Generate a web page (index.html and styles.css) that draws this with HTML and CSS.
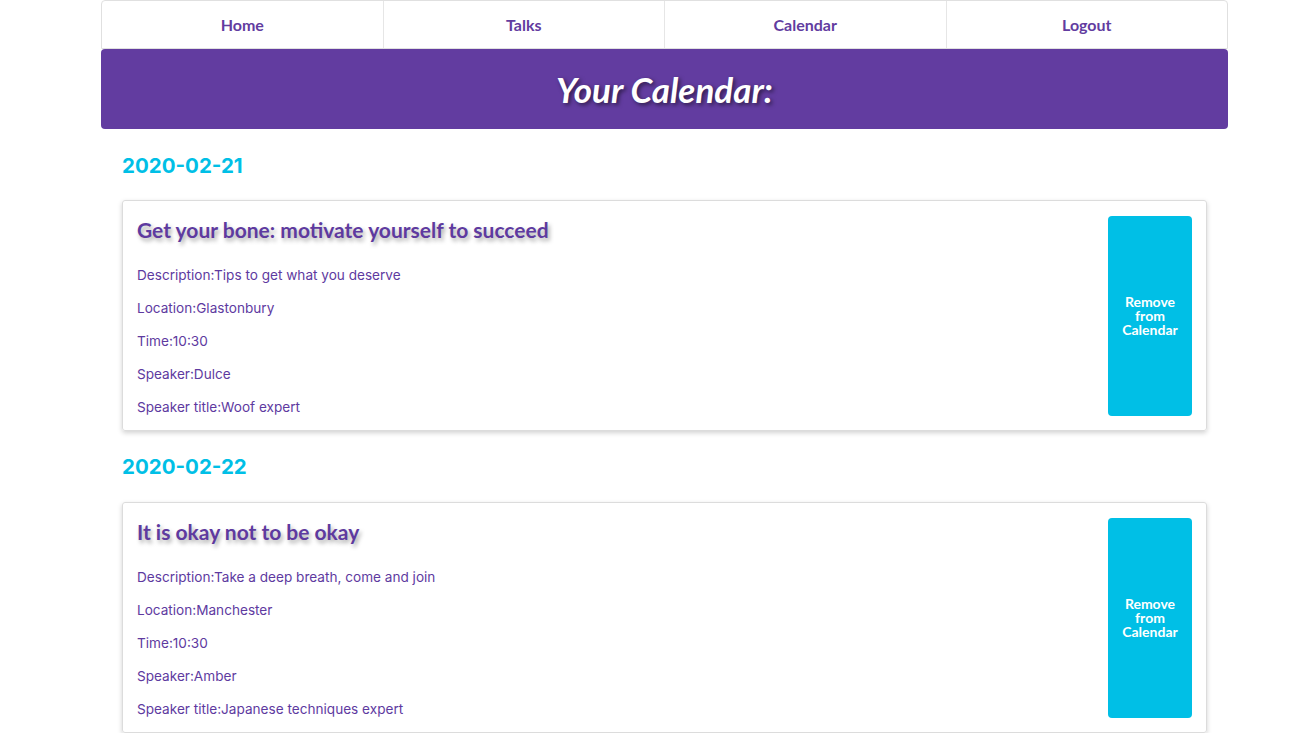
FILE: index.html
```html
<!DOCTYPE html>
<html>
<head>
<meta charset="utf-8">
<link rel="stylesheet" href="styles.css">
</head>
<body>
<div class="page">
  <nav class="nav">
    <a class="nav-item">Home</a>
    <a class="nav-item">Talks</a>
    <a class="nav-item">Calendar</a>
    <a class="nav-item">Logout</a>
  </nav>
  <header class="banner"><h1>Your Calendar:</h1></header>
  <section class="day">
    <h2 class="date">2020-02-21</h2>
    <div class="card">
      <div class="info">
        <h3 class="title">Get your bone: motivate yourself to succeed</h3>
        <p>Description:Tips to get what you deserve</p>
        <p>Location:Glastonbury</p>
        <p>Time:10:30</p>
        <p>Speaker:Dulce</p>
        <p>Speaker title:Woof expert</p>
      </div>
      <button class="remove">Remove from Calendar</button>
    </div>
  </section>
  <section class="day">
    <h2 class="date">2020-02-22</h2>
    <div class="card">
      <div class="info">
        <h3 class="title">It is okay not to be okay</h3>
        <p>Description:Take a deep breath, come and join</p>
        <p>Location:Manchester</p>
        <p>Time:10:30</p>
        <p>Speaker:Amber</p>
        <p>Speaker title:Japanese techniques expert</p>
      </div>
      <button class="remove">Remove from Calendar</button>
    </div>
  </section>
</div>
</body>
</html>
```

FILE: styles.css
```css
* { box-sizing: border-box; }
body {
  margin: 0;
  background: #fff;
  font-family: "Inter", "Liberation Sans", sans-serif;
}
.page {
  width: 1127px;
  margin-left: 101px;
}
.nav {
  display: flex;
  height: 49px;
  border: 1px solid #e0e0e0;
  border-radius: 4px 4px 0 0;
}
.nav-item {
  flex: 1;
  display: flex;
  align-items: center;
  justify-content: center;
  font-family: "Lato", sans-serif;
  font-weight: 700;
  font-size: 16px;
  color: #623ca0;
  border-left: 1px solid #e6e6e6;
}
.nav-item:first-child { border-left: none; }
.banner {
  height: 80px;
  background: #623ca0;
  border-radius: 4px;
  display: flex;
  align-items: center;
  justify-content: center;
}
.banner h1 {
  margin: 0;
  font-family: "Lato", sans-serif;
  font-style: italic;
  font-weight: 700;
  font-size: 35px;
  line-height: 42px;
  color: #fff;
  text-shadow: 2px 2px 4px rgba(0,0,0,0.55);
}
.day { padding: 0 21px; }
.date {
  margin: 24px 0 23px;
  font-family: "Inter", sans-serif;
  font-weight: 700;
  font-size: 20.5px;
  line-height: 24px;
  color: #00bfe6;
}
.day:first-of-type .date { margin-top: 25px; margin-bottom: 22px; }
.card {
  display: flex;
  align-items: flex-start;
  padding: 15px 14px 14px;
  border: 1px solid #dcdcdc;
  border-radius: 3px;
  box-shadow: 0 2px 5px rgba(0,0,0,0.18);
}
.info { flex: 1; }
.title {
  margin: 0 0 23px;
  font-family: "Lato", sans-serif;
  font-weight: 700;
  font-size: 21px;
  line-height: 28px;
  color: #5e3a9f;
  text-shadow: 2px 3px 4px rgba(0,0,0,0.35);
}
.info p {
  margin: 0 0 16px;
  font-size: 13.6px;
  line-height: 17px;
  color: #5e3a9f;
}
.info p:last-child { margin-bottom: 0; }
.remove {
  width: 84px;
  height: 200px;
  border: none;
  border-radius: 4px;
  background: #00bfe6;
  color: #fff;
  font-family: "Lato", sans-serif;
  font-weight: 700;
  font-size: 14px;
  line-height: 14px;
  padding: 0 6px;
}
```
